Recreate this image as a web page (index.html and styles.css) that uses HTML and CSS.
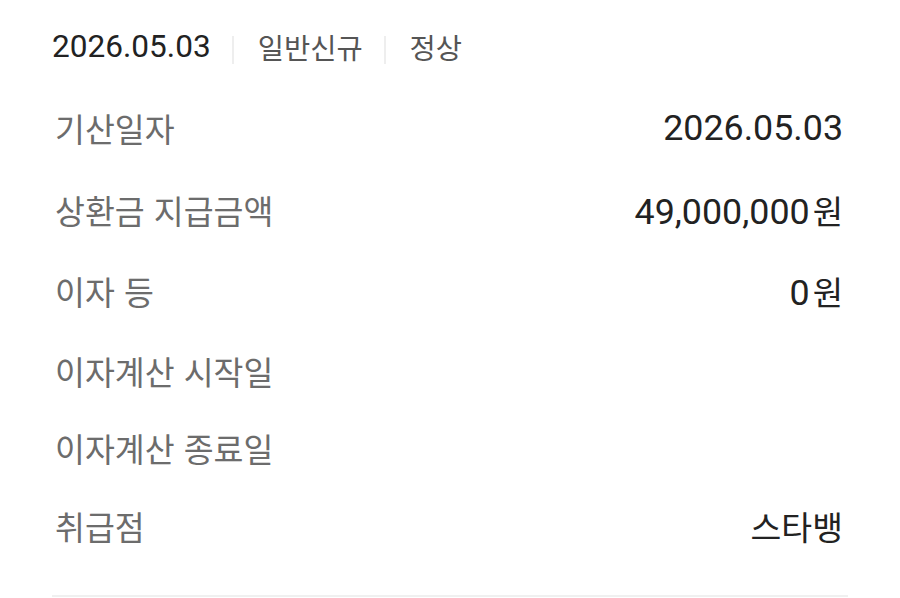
FILE: index.html
```html
<!DOCTYPE html>
<html lang="ko">
<head>
<meta charset="utf-8">
<link rel="stylesheet" href="styles.css">
</head>
<body>
<div class="wrap">
  <div class="head">
    <span class="date">2026.05.03</span>
    <span class="sep"></span>
    <span class="tag">일반신규</span>
    <span class="sep"></span>
    <span class="tag">정상</span>
  </div>
  <div class="list">
    <div class="row"><span class="label">기산일자</span><span class="value num">2026.05.03</span></div>
    <div class="row"><span class="label">상환금 지급금액</span><span class="value num">49,000,000<span class="unit">원</span></span></div>
    <div class="row"><span class="label">이자 등</span><span class="value num">0<span class="unit">원</span></span></div>
    <div class="row"><span class="label">이자계산 시작일</span></div>
    <div class="row"><span class="label">이자계산 종료일</span></div>
    <div class="row"><span class="label">취급점</span><span class="value kr">스타뱅</span></div>
  </div>
</div>
</body>
</html>
```
FILE: styles.css
```css
html, body {
  margin: 0;
  padding: 0;
  background: #ffffff;
}
body {
  font-family: Roboto, "Noto Sans CJK KR", sans-serif;
}
.wrap {
  padding: 27px 52px 0;
}
.head {
  display: flex;
  align-items: center;
  height: 40px;
}
.date {
  font-size: 31.6px;
  color: #222222;
  line-height: 40px;
}
.tag {
  font-family: "Noto Sans CJK KR", sans-serif;
  font-size: 28.5px;
  color: #555555;
  line-height: 40px;
}
.sep {
  width: 2px;
  height: 28px;
  background: #eeeeee;
  margin: 6px 24px 0 21px;
}
.list {
  margin-top: 39px;
  display: flex;
  flex-direction: column;
  gap: 37.6px;
  padding-bottom: 49px;
  border-bottom: 2px solid #f0f0f0;
  padding-right: 5px;
}
.row {
  display: flex;
  justify-content: space-between;
  align-items: center;
}
.label {
  display: block;
  height: 40px;
  font-family: "Noto Sans CJK KR", sans-serif;
  font-size: 32.5px;
  line-height: 40px;
  color: #6c6c6c;
  padding-left: 3px;
}
.value {
  color: #222222;
}
.num {
  display: flex;
  align-items: baseline;
  height: 44px;
  font-size: 35.8px;
  line-height: 44px;
}
.unit {
  font-family: "Noto Sans CJK KR", sans-serif;
  font-size: 33px;
  line-height: 44px;
  margin-left: 3px;
}
.kr {
  display: block;
  height: 40px;
  font-family: "Noto Sans CJK KR", sans-serif;
  font-size: 33.5px;
  line-height: 40px;
}
```
